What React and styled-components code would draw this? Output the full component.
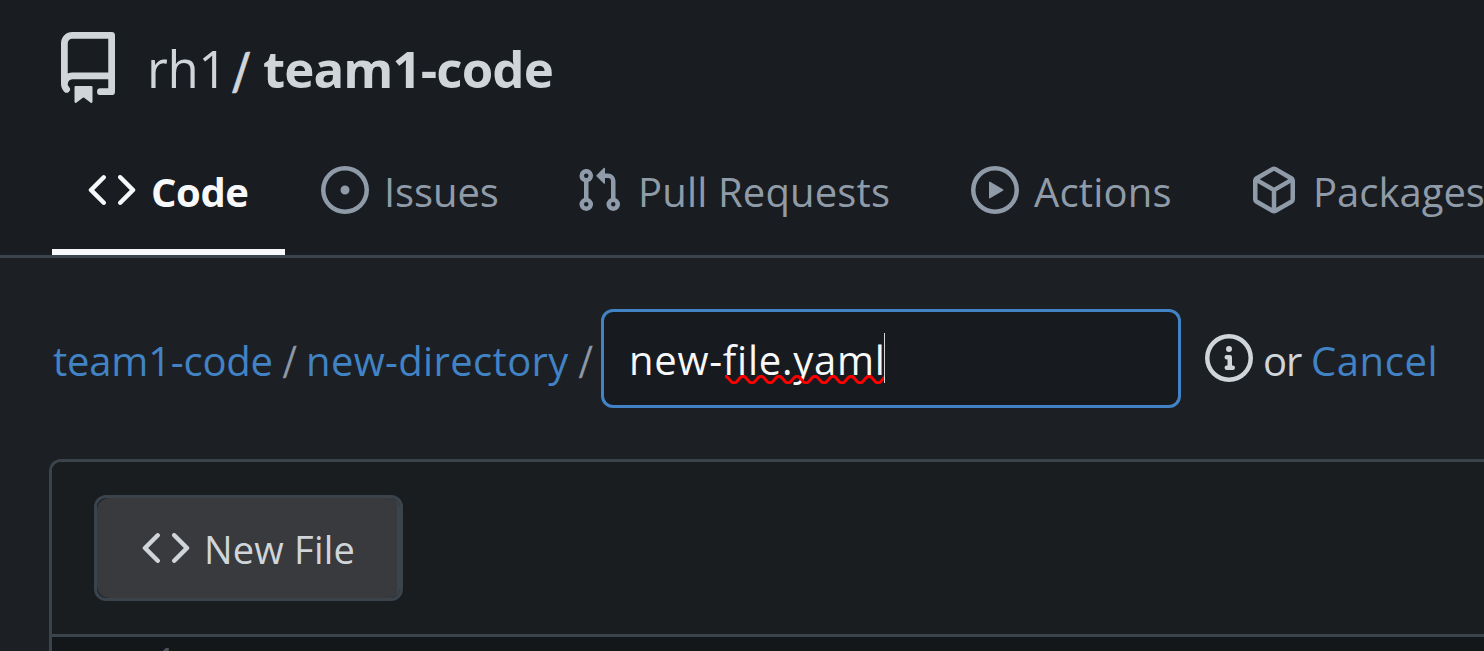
import React from "react";
import styled, { createGlobalStyle } from "styled-components";

const GlobalStyle = createGlobalStyle`
  * { box-sizing: border-box; }
  body {
    margin: 0;
    overflow: hidden;
    background: #1c1f24;
    color: #d0d5da;
    font-family: "Open Sans", "Noto Sans", sans-serif;
    font-size: 40px;
  }
`;

const ICONS = {
  repo: "M2 2.5A2.5 2.5 0 0 1 4.5 0h8.75a.75.75 0 0 1 .75.75v12.5a.75.75 0 0 1-.75.75h-2.5a.75.75 0 0 1 0-1.5h1.75v-2h-8a1 1 0 0 0-.714 1.7.75.75 0 1 1-1.072 1.05A2.495 2.495 0 0 1 2 11.5Zm10.5-1h-8a1 1 0 0 0-1 1v6.708A2.486 2.486 0 0 1 4.5 9h8ZM5 12.25a.25.25 0 0 1 .25-.25h3.5a.25.25 0 0 1 .25.25v3.25a.25.25 0 0 1-.4.2l-1.45-1.087a.249.249 0 0 0-.3 0L5.4 15.7a.25.25 0 0 1-.4-.2Z",
  code: "m11.28 3.22 4.25 4.25a.75.75 0 0 1 0 1.06l-4.25 4.25a.749.749 0 0 1-1.275-.326.749.749 0 0 1 .215-.734L13.94 8l-3.72-3.72a.749.749 0 0 1 .326-1.275.749.749 0 0 1 .734.215Zm-6.56 0a.751.751 0 0 1 1.042.018.751.751 0 0 1 .018 1.042L2.06 8l3.72 3.72a.749.749 0 0 1-.326 1.275.749.749 0 0 1-.734-.215L.47 8.53a.75.75 0 0 1 0-1.06Z",
  issue: "M8 9.5a1.5 1.5 0 1 0 0-3 1.5 1.5 0 0 0 0 3Z M8 0a8 8 0 1 1 0 16A8 8 0 0 1 8 0ZM1.5 8a6.5 6.5 0 1 0 13 0 6.5 6.5 0 0 0-13 0Z",
  pull: "M1.5 3.25a2.25 2.25 0 1 1 3 2.122v5.256a2.251 2.251 0 1 1-1.5 0V5.372A2.25 2.25 0 0 1 1.5 3.25Zm5.677-.177L9.573.677A.25.25 0 0 1 10 .854V2.5h1A2.5 2.5 0 0 1 13.5 5v5.628a2.251 2.251 0 1 1-1.5 0V5a1 1 0 0 0-1-1h-1v1.646a.25.25 0 0 1-.427.177L7.177 3.427a.25.25 0 0 1 0-.354ZM3.75 2.5a.75.75 0 1 0 0 1.5.75.75 0 0 0 0-1.5Zm0 9.5a.75.75 0 1 0 0 1.5.75.75 0 0 0 0-1.5Zm8.25.75a.75.75 0 1 0 1.5 0 .75.75 0 0 0-1.5 0Z",
  play: "M8 0a8 8 0 1 1 0 16A8 8 0 0 1 8 0ZM1.5 8a6.5 6.5 0 1 0 13 0 6.5 6.5 0 0 0-13 0Zm4.879-2.773 4.264 2.559a.25.25 0 0 1 0 .428l-4.264 2.559A.25.25 0 0 1 6 10.559V5.442a.25.25 0 0 1 .379-.215Z",
  package: "m8.878.392 5.25 3.045c.54.314.872.89.872 1.514v6.098a1.75 1.75 0 0 1-.872 1.514l-5.25 3.045a1.75 1.75 0 0 1-1.756 0l-5.25-3.045A1.75 1.75 0 0 1 1 11.049V4.951c0-.624.332-1.201.872-1.514L7.122.392a1.75 1.75 0 0 1 1.756 0ZM7.875 1.69l-4.63 2.685L8 7.133l4.755-2.758-4.63-2.685a.248.248 0 0 0-.25 0ZM2.5 5.677v5.372c0 .09.047.171.125.216l4.625 2.683V8.432Zm6.25 8.271 4.625-2.683a.25.25 0 0 0 .125-.216V5.677L8.75 8.432Z",
  info: "M0 8a8 8 0 1 1 16 0A8 8 0 0 1 0 8Zm8-6.5a6.5 6.5 0 1 0 0 13 6.5 6.5 0 0 0 0-13ZM6.5 7.75A.75.75 0 0 1 7.25 7h1a.75.75 0 0 1 .75.75v2.75h.25a.75.75 0 0 1 0 1.5h-2a.75.75 0 0 1 0-1.5h.25v-2h-.25a.75.75 0 0 1-.75-.75ZM8 6a1 1 0 1 1 0-2 1 1 0 0 1 0 2Z",
};

const Svg = styled.svg`
  flex: none;
  display: block;
  width: ${(p) => p.$size}px;
  height: ${(p) => p.$size}px;
  fill: currentColor;
`;

const Icon = ({ name, size = 48 }) => (
  <Svg viewBox="0 0 16 16" $size={size} aria-hidden="true">
    <path fillRule="evenodd" d={ICONS[name]} />
  </Svg>
);

const Page = styled.div`
  display: flex;
  flex-direction: column;
  height: 651px;
  overflow: hidden;
  white-space: nowrap;
`;

const RepoHeader = styled.header`
  flex: none;
  background: #191c21;
  border-bottom: 3px solid #3b444c;
`;

const TitleRow = styled.div`
  display: flex;
  align-items: center;
  height: 125px;
  padding: 32px 0 21px 52px;
  font-size: 51px;
  line-height: 72px;
`;

const Owner = styled.span`
  width: 84px;
  margin-left: 23px;
  letter-spacing: -0.4px;
`;

const Slash = styled.span`
  font-family: Lato, sans-serif;
  width: ${(p) => p.$width}px;
  padding-top: ${(p) => (p.$bold ? 5 : 4)}px;
  font-weight: ${(p) => (p.$bold ? 700 : 400)};
  color: ${(p) => (p.$bold ? "inherit" : "#8f9ba8")};
  -webkit-text-stroke: 0.6px currentColor;
  transform: scaleX(0.85);
  transform-origin: 0 50%;
`;

const RepoName = styled.span`
  font-weight: 700;
  letter-spacing: -0.9px;
`;

const Tabs = styled.nav`
  display: flex;
  height: 130px;
  padding-left: 52px;
`;

const Tab = styled.a`
  flex: none;
  display: flex;
  align-items: center;
  gap: 15px;
  width: ${(p) => p.$width}px;
  padding-left: 36px;
  padding-top: ${(p) => (p.$active ? 6 : 0)}px;
  color: ${(p) => (p.$active ? "#f7f8f9" : "#8f9ba8")};
  font-weight: ${(p) => (p.$active ? 700 : 400)};
  letter-spacing: ${(p) => p.$spacing}px;
  border-bottom: ${(p) => (p.$active ? "6px solid #f7f8fb" : "none")};
`;

const TabLabel = styled.span`
  padding-top: 2px;
`;

const Main = styled.main`
  flex: 1;
  display: flex;
  flex-direction: column;
  padding: 51px 0 0 49px;
`;

const PathRow = styled.div`
  flex: none;
  display: flex;
  align-items: center;
  height: 99px;
  padding-left: 4px;
`;

const PathText = styled.span`
  padding-top: 4px;
  width: ${(p) => p.$width}px;
  letter-spacing: ${(p) => p.$spacing}px;
`;

const PathLink = styled(PathText).attrs({ as: "a" })`
  color: #4183c4;
`;

const FileField = styled.div`
  flex: none;
  display: flex;
  align-items: center;
  width: 580px;
  height: 99px;
  padding-left: 25px;
  background: #171a1e;
  border: 3px solid #4183c4;
  border-radius: 12px;
  color: #f7f8f9;
  letter-spacing: 0.75px;
`;

const FileValue = styled.span`
  position: relative;
  width: 255px;
  padding-top: 2px;
`;

const Caret = styled.span`
  width: 1px;
  height: 50px;
  margin-bottom: 1px;
  background: #d0d5da;
`;

const Squiggle = styled.svg`
  position: absolute;
  left: 96px;
  bottom: 3px;
  width: 159px;
  height: 9px;
  fill: none;
  stroke: #f00;
  stroke-width: 3;
`;

const InfoMark = styled.span`
  margin: 0 10px 1px 24px;
`;

const Editor = styled.section`
  flex: 1;
  margin-top: 51px;
  background: #14171a;
  border: 3px solid #3b444c;
  border-right: none;
  border-bottom: none;
  border-radius: 12px 0 0 0;
  overflow: hidden;
`;

const EditorHeader = styled.div`
  height: 175px;
  padding: 33px 0 0 42px;
  background: #1a1d1f;
  border-bottom: 3px solid #3b444c;
`;

const Segment = styled.div`
  width: 309px;
  height: 106px;
  border: 3px solid #3b444c;
  border-radius: 12px;
  overflow: hidden;
`;

const SegmentItem = styled.button`
  display: flex;
  align-items: center;
  gap: 14px;
  width: 100%;
  height: 100%;
  padding: 0 0 0 45px;
  color: #d0d5da;
  background: #383a3e;
  border: none;
  border-right: 3px solid #3b444c;
  border-radius: 12px 0 0 12px;
  font: 400 38px "Open Sans", "Noto Sans", sans-serif;
  letter-spacing: 0.2px;
`;

const LineNumber = styled.div`
  padding: 2px 0 0 103px;
  color: #4b545d;
  font: 36px/48px "Liberation Mono", monospace;
`;

const TABS = [
  { icon: "code", label: "Code", width: 233, spacing: -0.4, active: true },
  { icon: "issue", label: "Issues", width: 254, spacing: -0.1 },
  { icon: "pull", label: "Pull Requests", width: 396, spacing: 0.15 },
  { icon: "play", label: "Actions", width: 279, spacing: 0.2 },
  { icon: "package", label: "Packages", width: 290, spacing: 0 },
];

const WAVE =
  "M0 1.2" + Array.from({ length: 9 }, () => "c4 0 5 6.8 9 6.8s5-6.8 9-6.8").join("");

export default function App() {
  return (
    <Page>
      <GlobalStyle />
      <RepoHeader>
        <TitleRow>
          <Icon name="repo" size={72} />
          <Owner>rh1</Owner>
          <Slash $bold $width={32}>/</Slash>
          <RepoName>team1-code</RepoName>
        </TitleRow>
        <Tabs>
          {TABS.map((t) => (
            <Tab key={t.label} $width={t.width} $spacing={t.spacing} $active={t.active}>
              <Icon name={t.icon} />
              <TabLabel>{t.label}</TabLabel>
            </Tab>
          ))}
        </Tabs>
      </RepoHeader>
      <Main>
        <PathRow>
          <PathLink $width={229} $spacing={-0.2}>team1-code</PathLink>
          <Slash $width={24}>/</Slash>
          <PathLink $width={272} $spacing={0.35}>new-directory</PathLink>
          <Slash $width={23}>/</Slash>
          <FileField>
            <FileValue>
              new-file.yaml
              <Squiggle viewBox="0 0 159 9">
                <path d={WAVE} />
              </Squiggle>
            </FileValue>
            <Caret />
          </FileField>
          <InfoMark>
            <Icon name="info" />
          </InfoMark>
          <PathText $width={48} $spacing={-1}>or</PathText>
          <PathLink $width={140} $spacing={0.6}>Cancel</PathLink>
        </PathRow>
        <Editor>
          <EditorHeader>
            <Segment>
              <SegmentItem>
                <Icon name="code" />
                <TabLabel>New File</TabLabel>
              </SegmentItem>
            </Segment>
          </EditorHeader>
          <LineNumber>1</LineNumber>
        </Editor>
      </Main>
    </Page>
  );
}
